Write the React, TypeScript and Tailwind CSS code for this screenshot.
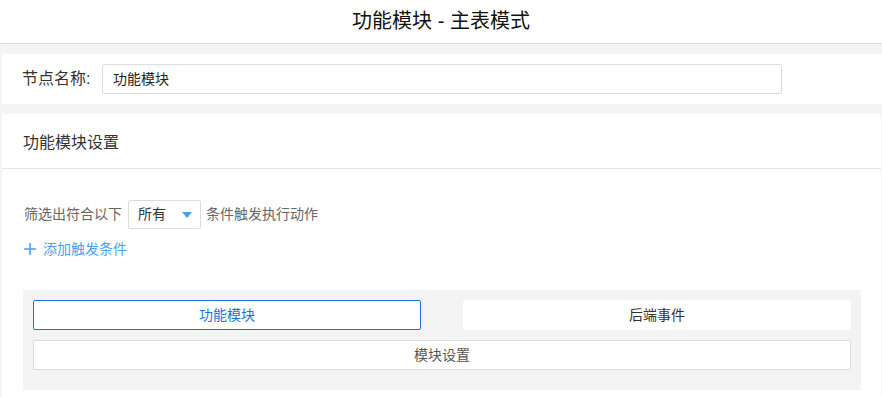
import React from "react";

const font = "font-['Liberation_Sans','Noto_Sans_CJK_SC',sans-serif]";

export default function App() {
    return (
        <div className={`w-full h-[397px] overflow-hidden bg-[#f4f4f4] ${font}`}>
            {/* Header */}
            <div className="h-[44px] bg-white border-b border-[#dedede] flex items-center justify-center">
                <h1 className="text-[20px] text-[#111] pb-[1px]">功能模块 - 主表模式</h1>
            </div>

            <div className="pl-[2px] pt-[10px] flex flex-col gap-[10px]">
                {/* Node name */}
                <div className="h-[50px] bg-white flex items-center pl-[20px]">
                    <span className="w-[80px] text-[16px] text-[#333]">节点名称:</span>
                    <div className="w-[680px] h-[30px] border border-[#dcdcdc] rounded-[2px] flex items-center px-[10px] text-[14px] text-[#222]">
                        功能模块
                    </div>
                </div>

                {/* Module settings */}
                <div className="bg-white rounded-tr-[3px] mr-[1px] h-[300px]">
                    <div className="h-[55px] border-b border-[#e6e6e6] flex items-center pl-[21px] pt-[3px] text-[16px] text-[#333]">
                        功能模块设置
                    </div>

                    <div className="pl-[21px] pr-[20px] pt-[31px]">
                        <div className="flex items-center text-[14px] text-[#666]">
                            <span className="ml-[1px]">筛选出符合以下</span>
                            <div className="ml-[6px] w-[73px] h-[29px] border border-[#dcdcdc] rounded-[2px] flex items-center justify-between pl-[9px] pr-[8px] text-[#333]">
                                <span>所有</span>
                                <svg width="10" height="6" viewBox="0 0 10 6">
                                    <path d="M0 0 L10 0 L5 6 Z" fill="#4a9ff5" />
                                </svg>
                            </div>
                            <span className="ml-[5px]">条件触发执行动作</span>
                        </div>

                        <div className="mt-[10px] h-[20px] flex items-center gap-[7px] text-[14px] text-[#4a9ff5] ml-[1px]">
                            <svg width="12" height="12" viewBox="0 0 12 12">
                                <path d="M6 0 V12 M0 6 H12" stroke="#4a9ff5" strokeWidth="1.6" />
                            </svg>
                            <span>添加触发条件</span>
                        </div>

                        <div className="mt-[31px] bg-[#f3f3f3] pt-[10px] px-[10px] pb-[20px] flex flex-col gap-[10px]">
                            <div className="grid grid-cols-2 gap-[42px]">
                                <button className="h-[30px] bg-white border border-[#1a73e0] rounded-[2px] text-[14px] text-[#1a73e0]">
                                    功能模块
                                </button>
                                <button className="h-[30px] bg-white border border-white rounded-[2px] text-[14px] text-[#333]">
                                    后端事件
                                </button>
                            </div>
                            <button className="h-[30px] bg-white border border-[#dcdcdc] rounded-[2px] text-[14px] text-[#555]">
                                模块设置
                            </button>
                        </div>
                    </div>
                </div>
            </div>
        </div>
    );
}
